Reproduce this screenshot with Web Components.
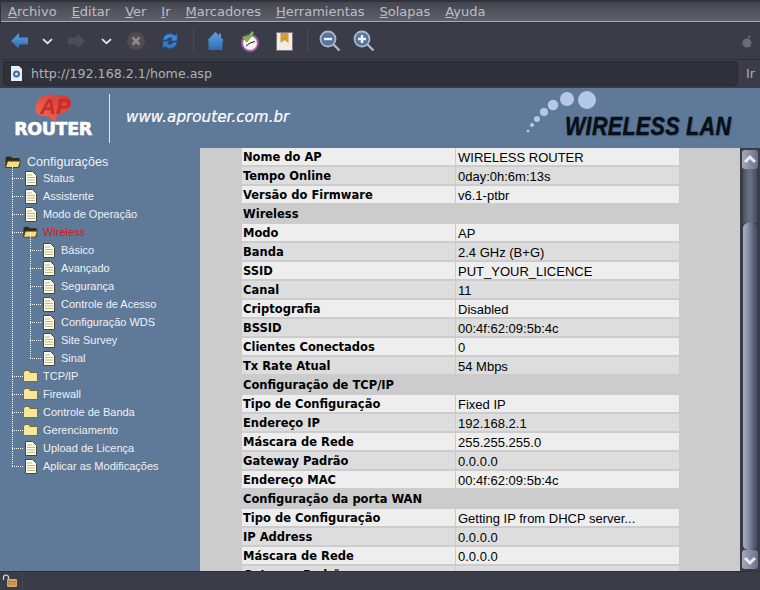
<!DOCTYPE html>
<html>
<head>
<meta charset="utf-8">
<style>
html, body { margin: 0; padding: 0; height: 100%; overflow: hidden; background: #3a3d47; }
body { display: flex; flex-direction: column; height: 590px; width: 760px; font-family: "DejaVu Sans", sans-serif; }
</style>
</head>
<body>
<browser-menu></browser-menu>
<browser-toolbar></browser-toolbar>
<browser-address url="http://192.168.2.1/home.asp"></browser-address>
<router-page></router-page>
<browser-status></browser-status>

<script>
class BrowserMenu extends HTMLElement {
    constructor() {
        super();
        this.attachShadow({ mode: "open" });
    }
    connectedCallback() {
        const items = ["Archivo", "Editar", "Ver", "Ir", "Marcadores", "Herramientas", "Solapas", "Ayuda"];
        const links = items.map((t) => `<span><u>${t[0]}</u>${t.slice(1)}</span>`).join("");
        this.shadowRoot.innerHTML = `
        <style>
            :host {
                display: flex;
                box-sizing: border-box;
                height: 23px;
                padding: 2px 0 0 1px;
                background: #30333c;
            }
            .bar {
                flex: 1;
                box-sizing: border-box;
                height: 20px;
                display: flex;
                align-items: center;
                gap: 15px;
                padding: 0 0 0 7px;
                font: 13px "DejaVu Sans", sans-serif;
                color: #bcbec6;
                border-bottom: 1px solid #a9abb0;
                background: linear-gradient(#43464f, #50535b 45%, #5d6068);
            }
        </style>
        <div class="bar">${links}</div>`;
    }
}

class BrowserToolbar extends HTMLElement {
    constructor() {
        super();
        this.attachShadow({ mode: "open" });
    }
    connectedCallback() {
        const chevron = `<svg width="11" height="7" viewBox="0 0 11 7"><path d="M1 1.200l4.500 4 4.500-4" fill="none" stroke="#e2e4ea" stroke-width="1.800"/></svg>`;
        const gap = (w) => `<span style="width:${w}px;flex:none"></span>`;
        const lens = (d) => `<svg width="22" height="22" viewBox="0 0 22 22"><path d="M14.500 14.500l6 6" stroke="#b4b7bd" stroke-width="2.400"/><circle cx="9" cy="9" r="7.500" fill="#56759e" stroke="#aab6c6" stroke-width="1.800"/><path d="${d}" stroke="#eef2f7" stroke-width="2.400"/></svg>`;
        this.shadowRoot.innerHTML = `
        <style>
            :host {
                display: flex;
                align-items: center;
                box-sizing: border-box;
                height: 37px;
                padding-left: 11px;
                background: #3a3d47;
                border-bottom: 1px solid #2e3038;
            }
            svg { display: block; flex: none; }
            .sep { width: 1px; height: 24px; background: #4a4d57; flex: none; }
            .ball { margin-left: auto; margin-right: 8px; }
        </style>
        <svg width="17" height="16" viewBox="0 0 17 16"><defs><linearGradient id="b" x1="0" y1="0" x2="0" y2="1"><stop offset="0" stop-color="#5ea4e6"/><stop offset="1" stop-color="#2c66ad"/></linearGradient></defs><path d="M0 8l8-8v4.500h9v7H8V16z" fill="url(#b)"/></svg>
        ${gap(14)}${chevron}${gap(15)}
        <svg width="17" height="16" viewBox="0 0 17 16"><path d="M17 8L9 0v4.500H0v7h9V16z" fill="#4b4e56"/></svg>
        ${gap(16)}${chevron}${gap(15)}
        <svg width="18" height="18" viewBox="0 0 18 18"><circle cx="9" cy="9" r="9" fill="#504c4e"/><path d="M5.500 5.500l7 7m0-7l-7 7" stroke="#908d8e" stroke-width="2.600"/></svg>
        ${gap(16)}
        <svg width="18" height="18" viewBox="0 0 20 20"><path d="M2 9a8 8 0 0 1 13.500-5L18 1.500V10h-8l2.500-2.800a4 4 0 0 0-6 1.800z" fill="#3f88d2" stroke="#1f4c88" stroke-width=".8"/><path d="M18 11a8 8 0 0 1-13.500 5L2 18.500V10h8l-2.500 2.800a4 4 0 0 0 6-1.800z" fill="#3a7cc4" stroke="#1f4c88" stroke-width=".8"/></svg>
        ${gap(14)}<span class="sep"></span>${gap(13)}
        <svg width="17" height="18" viewBox="0 0 17 18"><defs><linearGradient id="h" x1="0" y1="0" x2="0" y2="1"><stop offset="0" stop-color="#5da3e4"/><stop offset="1" stop-color="#2f6cb2"/></linearGradient></defs><path d="M8.500 0L12 3.500V1.500h2v4L17 8.500h-1.500V18H1.500V8.500H0z" fill="url(#h)"/></svg>
        ${gap(16)}
        <svg width="19" height="21" viewBox="0 0 19 21"><circle cx="10" cy="12" r="8" fill="#f4f0f4" stroke="#9a5ea0" stroke-width="2"/><path d="M10 12l5-1.500M10 12l-4 3" stroke="#222" stroke-width="1"/><path d="M2 6l3-1 2 2 5-7 2 2-7 9z" fill="#7cc13c" stroke="#4d8a1f" stroke-width=".6"/></svg>
        ${gap(17)}
        <svg width="17" height="19" viewBox="0 0 17 19"><rect x=".5" y=".5" width="16" height="18" fill="#f0ede4" stroke="#77797f"/><path d="M4.500 1h8v10l-4-3-4 3z" fill="#d49a3c"/></svg>
        ${gap(14)}<span class="sep"></span>${gap(11)}
        ${lens("M5 9h8")}
        ${gap(12)}
        ${lens("M5 9h8M9 5v8")}
        <svg class="ball" width="10" height="13" viewBox="0 0 10 13"><circle cx="5" cy="8" r="4.500" fill="#6b6e72"/><path d="M6 3l2-2" stroke="#777" stroke-width="1.200"/></svg>`;
    }
}

class BrowserAddress extends HTMLElement {
    constructor() {
        super();
        this.attachShadow({ mode: "open" });
    }
    connectedCallback() {
        const url = this.getAttribute("url");
        this.shadowRoot.innerHTML = `
        <style>
            :host {
                display: flex;
                align-items: center;
                box-sizing: border-box;
                height: 28px;
                padding: 1px 0 2px 3px;
                background: #3a3d47;
            }
            .field {
                flex: 1;
                height: 25px;
                box-sizing: border-box;
                display: flex;
                align-items: center;
                padding-left: 6px;
                gap: 8px;
                background: #30323b;
                border: 1px solid #292b33;
                border-radius: 3px;
                font: 12.600px "DejaVu Sans", sans-serif;
                color: #aeb0b7;
            }
            .go { width: 22px; box-sizing: border-box; padding-left: 8px; font: 12.600px "DejaVu Sans", sans-serif; color: #aeb0b7; }
        </style>
        <div class="field">
            <svg width="13" height="15" viewBox="0 0 13 15"><path d="M1 0h8l3 3v12H1z" fill="#e9eef5"/><circle cx="6.500" cy="8" r="3.500" fill="#3d6ea8"/><circle cx="6.500" cy="8" r="1.500" fill="#dfe8f2"/></svg>
            <span>${url}</span>
        </div>
        <span class="go">Ir</span>`;
    }
}

class RouterPage extends HTMLElement {
    constructor() {
        super();
        this.attachShadow({ mode: "open" });
    }
    connectedCallback() {
        this.shadowRoot.innerHTML = `
        <style>
            :host {
                display: grid;
                grid-template-columns: 200px 1fr 20px;
                grid-template-rows: 60px 1fr;
                flex: 1;
                min-height: 0;
                background: #5f7999;
            }
            router-banner { grid-column: 1 / -1; }
            status-table { min-height: 0; }
        </style>
        <router-banner></router-banner>
        <router-tree></router-tree>
        <status-table></status-table>
        <page-scrollbar></page-scrollbar>`;
    }
}

class RouterBanner extends HTMLElement {
    constructor() {
        super();
        this.attachShadow({ mode: "open" });
    }
    connectedCallback() {
        this.shadowRoot.innerHTML = `
        <style>
            :host {
                display: flex;
                align-items: flex-start;
                background: #5f7999;
                position: relative;
            }
            .logo {
                width: 109px;
                height: 60px;
                flex: none;
                display: flex;
                flex-direction: column;
                align-items: center;
                box-sizing: border-box;
                padding: 6px 3px 0 0;
            }
            .logo svg { display: block; }
            .logo b {
                font: 700 17.500px "DejaVu Sans", sans-serif;
                letter-spacing: -0.4px;
                color: #fff;
                line-height: 14px;
                -webkit-text-stroke: 0.6px #fff;
                margin-top: -1px;
            }
            .rule { width: 1px; height: 49px; background: #dfe4ea; margin-top: 6px; flex: none; }
            .url {
                margin: 20px 0 0 16px;
                font: italic 400 15.200px "DejaVu Sans", sans-serif;
                color: #fff;
                -webkit-text-stroke: 0.2px #fff;
            }
            .wlan {
                margin: 25px 29px 0 auto;
                font: italic 700 26px "Liberation Sans", sans-serif;
                color: #071018;
                letter-spacing: 0.4px;
                line-height: 26px;
                white-space: nowrap;
                transform: scaleX(0.826);
                transform-origin: right center;
                -webkit-text-stroke: 0.5px #071018;
                text-shadow: 1px 1px 2px rgba(60, 80, 110, 0.6);
            }
            .dots { position: absolute; left: 526px; top: 0; }
        </style>
        <div class="logo">
            <svg width="36" height="29" viewBox="0 0 36 29">
                <defs><linearGradient id="r" x1="0" y1="1" x2="1" y2="0"><stop offset="0" stop-color="#f2705a"/><stop offset="1" stop-color="#d9302c"/></linearGradient></defs>
                <path d="M1 18C-1 11 3 3 11 1c4-1 7 0 9 2 4-3 12-3 15 2 2 5 0 11-5 13l-5 2-3 2-3 7c-2-5-6-7-11-7-3 0-5-1-7-4z" fill="url(#r)"/>
                <text x="5" y="20" font-family="Liberation Sans" font-size="22" font-style="italic" font-weight="700" fill="#c22f2a">AP</text>
            </svg>
            <b>ROUTER</b>
        </div>
        <div class="rule"></div>
        <div class="url">www.aprouter.com.br</div>
        <svg class="dots" width="76" height="48" viewBox="0 0 76 48" fill="#b5c8e8">
            <circle cx="61" cy="12" r="9"/><circle cx="41" cy="11" r="7"/><circle cx="27" cy="17" r="5.300"/><circle cx="18" cy="24" r="4"/><circle cx="11" cy="31" r="3"/><circle cx="6" cy="37" r="2"/><circle cx="2" cy="43" r="1.300"/>
        </svg>
        <div class="wlan">WIRELESS LAN</div>`;
    }
}

class RouterTree extends HTMLElement {
    constructor() {
        super();
        this.attachShadow({ mode: "open" });
    }
    connectedCallback() {
        const tree = [
            [1, "doc", "Status"], [1, "doc", "Assistente"], [1, "doc", "Modo de Operação"],
            [1, "open", "Wireless", true],
            [2, "doc", "Básico"], [2, "doc", "Avançado"], [2, "doc", "Segurança"], [2, "doc", "Controle de Acesso"],
            [2, "doc", "Configuração WDS"], [2, "doc", "Site Survey"], [2, "doc", "Sinal"],
            [1, "folder", "TCP/IP"], [1, "folder", "Firewall"], [1, "folder", "Controle de Banda"], [1, "folder", "Gerenciamento"],
            [1, "doc", "Upload de Licença"], [1, "doc", "Aplicar as Modificações"],
        ];
        const icons = {
            doc: `<svg width="12" height="15" viewBox="0 0 12 15"><path d="M.5.500h7l4 4v10H.5z" fill="#fdfae6" stroke="#4a4738"/><path d="M2 4h5M2 6.500h8M2 9h8M2 11.500h8" stroke="#bdb88f"/></svg>`,
            folder: `<svg width="15" height="12" viewBox="0 0 15 12"><path d="M.5 2.500l1.500-2h4l1 2h7.500v9H.5z" fill="#f7e79c" stroke="#7a6c36"/></svg>`,
            open: `<svg width="16" height="12" viewBox="0 0 16 12"><path d="M.5 2l1.500-1.500h4l1 1.500h7.500v9H.5z" fill="#2e2b1a"/><path d="M.5 11.500l2-6.500h13l-2 6.500z" fill="#f2dc84" stroke="#4a3f18"/></svg>`,
        };
        const rows = tree.map(([level, icon, label, active]) => `
            <div class="row l${level}">
                ${level === 2 ? `<i class="up"></i>` : ""}
                <i class="dash"></i>
                <span class="ic">${icons[icon]}</span>
                <span class="lb ${active ? "red" : ""}">${label}</span>
            </div>`).join("");
        this.shadowRoot.innerHTML = `
        <style>
            :host {
                display: block;
                background: #5f7999;
                font: 11px "Liberation Sans", sans-serif;
                color: #eef1f5;
                overflow: hidden;
                position: relative;
            }
            .root { display: flex; align-items: center; height: 17px; margin-top: 5px; margin-bottom: -1px; padding-left: 5px; font-size: 12.600px; }
            .root svg { margin-right: 6px; }
            .tree { position: relative; }
            .row { display: flex; align-items: center; height: 18px; position: relative; }
            .dash { width: 11px; height: 0; border-top: 1px dotted #fff; flex: none; }
            .l1 { padding-left: 12px; }
            .l2 { padding-left: 30px; }
            .ic { width: 15px; display: flex; justify-content: center; flex: none; }
            .ic svg { display: block; }
            .lb { margin-left: 5px; white-space: nowrap; }
            .red { color: #e01020; }
            .up { position: absolute; left: 30px; top: -9px; height: 18px; border-left: 1px dotted #fff; }
            .spine { position: absolute; left: 12px; top: -4px; bottom: 9px; border-left: 1px dotted #fff; }
        </style>
        <div class="root">${icons.open}<span>Configurações</span></div>
        <div class="tree"><div class="spine"></div>${rows}</div>`;
    }
}

class StatusTable extends HTMLElement {
    constructor() {
        super();
        this.attachShadow({ mode: "open" });
    }
    connectedCallback() {
        const data = [
            ["Nome do AP", "WIRELESS ROUTER"], ["Tempo Online", "0day:0h:6m:13s"], ["Versão do Firmware", "v6.1-ptbr"],
            ["Wireless"],
            ["Modo", "AP"], ["Banda", "2.4 GHz (B+G)"], ["SSID", "PUT_YOUR_LICENCE"], ["Canal", "11"], ["Criptografia", "Disabled"],
            ["BSSID", "00:4f:62:09:5b:4c"], ["Clientes Conectados", "0"], ["Tx Rate Atual", "54 Mbps"],
            ["Configuração de TCP/IP"],
            ["Tipo de Configuração", "Fixed IP"], ["Endereço IP", "192.168.2.1"], ["Máscara de Rede", "255.255.255.0"],
            ["Gateway Padrão", "0.0.0.0"], ["Endereço MAC", "00:4f:62:09:5b:4c"],
            ["Configuração da porta WAN"],
            ["Tipo de Configuração", "Getting IP from DHCP server..."], ["IP Address", "0.0.0.0"], ["Máscara de Rede", "0.0.0.0"], ["Gateway Padrão", "0.0.0.0"],
        ];
        let alt = false;
        const rows = data.map(([k, v]) => {
            if (v === undefined) {
                alt = false;
                return `<div class="sec">${k}</div>`;
            }
            const c = alt ? "alt" : "";
            alt = !alt;
            return `<div class="k ${c}">${k}</div><div class="v ${c}">${v}</div>`;
        }).join("");
        this.shadowRoot.innerHTML = `
        <style>
            :host { display: block; background: #cccccc; overflow: hidden; padding-left: 42px; }
            .grid {
                display: grid;
                grid-template-columns: 213px 223px;
                grid-auto-rows: 17px;
                row-gap: 2px;
                column-gap: 1px;
                width: 436px;
                color: #000;
            }
            .k, .sec {
                box-sizing: border-box;
                background: #eeeeee;
                font: 700 11.500px "DejaVu Sans", sans-serif;
                padding: 1px 0 0 1px;
                line-height: 17px;
                white-space: nowrap;
            }
            .sec { grid-column: 1 / -1; background: #cccccc; }
            .v {
                box-sizing: border-box;
                background: #eeeeee;
                font: 13px "Liberation Sans", sans-serif;
                padding: 1px 0 0 2px;
                line-height: 17px;
                white-space: nowrap;
            }
            .alt { background: #dddddd; }
        </style>
        <div class="grid">${rows}</div>`;
    }
}

class PageScrollbar extends HTMLElement {
    constructor() {
        super();
        this.attachShadow({ mode: "open" });
    }
    connectedCallback() {
        const btn = (d) => `<div class="btn"><svg width="14" height="18" viewBox="0 0 14 18"><path d="${d}" fill="none" stroke="#e6e9ef" stroke-width="3"/></svg></div>`;
        this.shadowRoot.innerHTML = `
        <style>
            :host {
                display: flex;
                flex-direction: column;
                align-items: center;
                background: #3a3d47;
                padding: 2px 0 2px;
                box-sizing: border-box;
                min-height: 0;
            }
            .btn {
                width: 16px;
                height: 19px;
                display: flex;
                align-items: center;
                justify-content: center;
                border-radius: 3px;
                background: linear-gradient(90deg, #a5abbd, #6a7186);
                flex: none;
            }
            .gap {
                height: 54px;
                width: 14px;
                flex: none;
                background: linear-gradient(90deg, #4c5263, #6b7385, #454a5a);
            }
            .thumb {
                flex: 1;
                width: 14px;
                border-radius: 5px;
                background: linear-gradient(90deg, #a9b0c6, #8c93a8 35%, #5a6175 75%, #4a5064);
            }
        </style>
        ${btn("M2 11l5-5 5 5")}
        <div class="gap"></div>
        <div class="thumb"></div>
        ${btn("M2 7l5 5 5-5")}`;
    }
}

class BrowserStatus extends HTMLElement {
    constructor() {
        super();
        this.attachShadow({ mode: "open" });
    }
    connectedCallback() {
        this.shadowRoot.innerHTML = `
        <style>
            :host {
                display: flex;
                align-items: center;
                box-sizing: border-box;
                height: 19px;
                flex: none;
                padding-left: 2px;
                background: #3a3d47;
                border-top: 1px solid #2e3038;
            }
            .cell { width: 20px; height: 100%; display: flex; align-items: center; border-right: 1px solid #44474f; }
        </style>
        <div class="cell"><svg width="16" height="14" viewBox="0 0 16 14"><path d="M1.500 6V3.500a2.500 2.500 0 0 1 5 0V6" fill="none" stroke="#ddd" stroke-width="1.200"/><rect x="5" y="5" width="10" height="8" rx="1" fill="#d9a55a"/><path d="M6 7.500h8M6 10h8" stroke="#a8763a"/></svg></div>`;
    }
}

customElements.define("browser-menu", BrowserMenu);
customElements.define("browser-toolbar", BrowserToolbar);
customElements.define("browser-address", BrowserAddress);
customElements.define("router-page", RouterPage);
customElements.define("router-banner", RouterBanner);
customElements.define("router-tree", RouterTree);
customElements.define("status-table", StatusTable);
customElements.define("page-scrollbar", PageScrollbar);
customElements.define("browser-status", BrowserStatus);
</script>
</body>
</html>
